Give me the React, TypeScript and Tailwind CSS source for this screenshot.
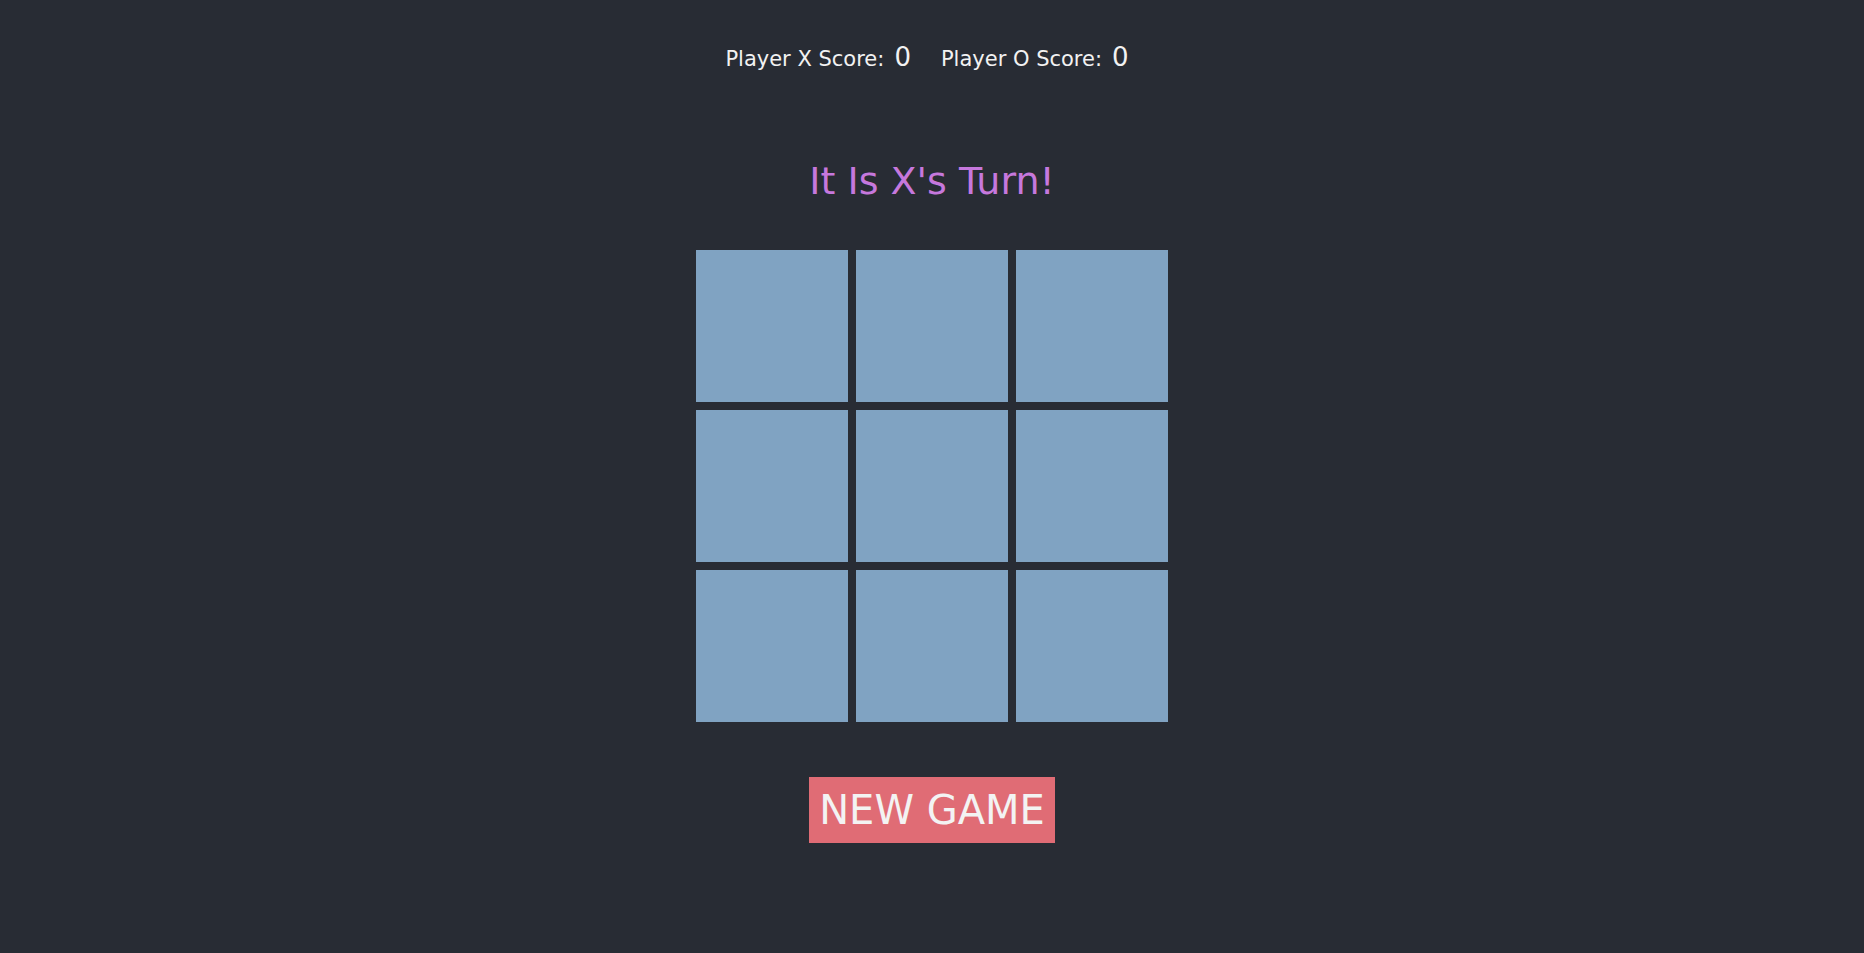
import { useState } from "react";

type Cell = "X" | "O" | null;

const font = { fontFamily: '"DejaVu Sans", Verdana, sans-serif' };

export default function App() {
  const [board, setBoard] = useState<Cell[]>(Array(9).fill(null));
  const [xTurn, setXTurn] = useState(true);
  const [scores] = useState({ x: 0, o: 0 });

  const handleClick = (i: number) => {
    if (board[i]) return;
    const next = board.slice();
    next[i] = xTurn ? "X" : "O";
    setBoard(next);
    setXTurn(!xTurn);
  };

  const newGame = () => {
    setBoard(Array(9).fill(null));
    setXTurn(true);
  };

  return (
    <div className="min-h-screen bg-[#282c34] flex flex-col items-center" style={font}>
      {/* Scores */}
      <div className="flex items-baseline pt-[38px] text-[#f2f2f2]">
        <div className="flex items-baseline">
          <span className="text-[21px]">Player X Score:</span>
          <span className="text-[26px] mx-[10px]">{scores.x}</span>
        </div>
        <div className="flex items-baseline ml-[20px]">
          <span className="text-[21px]">Player O Score:</span>
          <span className="text-[26px] mx-[10px]">{scores.o}</span>
        </div>
      </div>

      {/* Turn */}
      <h1 className="mt-[82px] text-[38px] text-[#c678dd] leading-[normal]">
        It Is {xTurn ? "X" : "O"}'s Turn!
      </h1>

      {/* Board */}
      <div className="mt-[47px] grid grid-cols-[repeat(3,152px)] gap-[8px]">
        {board.map((cell, i) => (
          <button
            key={i}
            onClick={() => handleClick(i)}
            className="w-[152px] h-[152px] bg-[#80a3c2] text-[#282c34] text-[80px] flex items-center justify-center"
          >
            {cell}
          </button>
        ))}
      </div>

      {/* New game */}
      <button
        onClick={newGame}
        className="mt-[55px] bg-[#e06c75] text-[#f3f3f3] text-[40px] leading-[normal] px-[10px] py-[10px]"
      >
        NEW GAME
      </button>
    </div>
  );
}
